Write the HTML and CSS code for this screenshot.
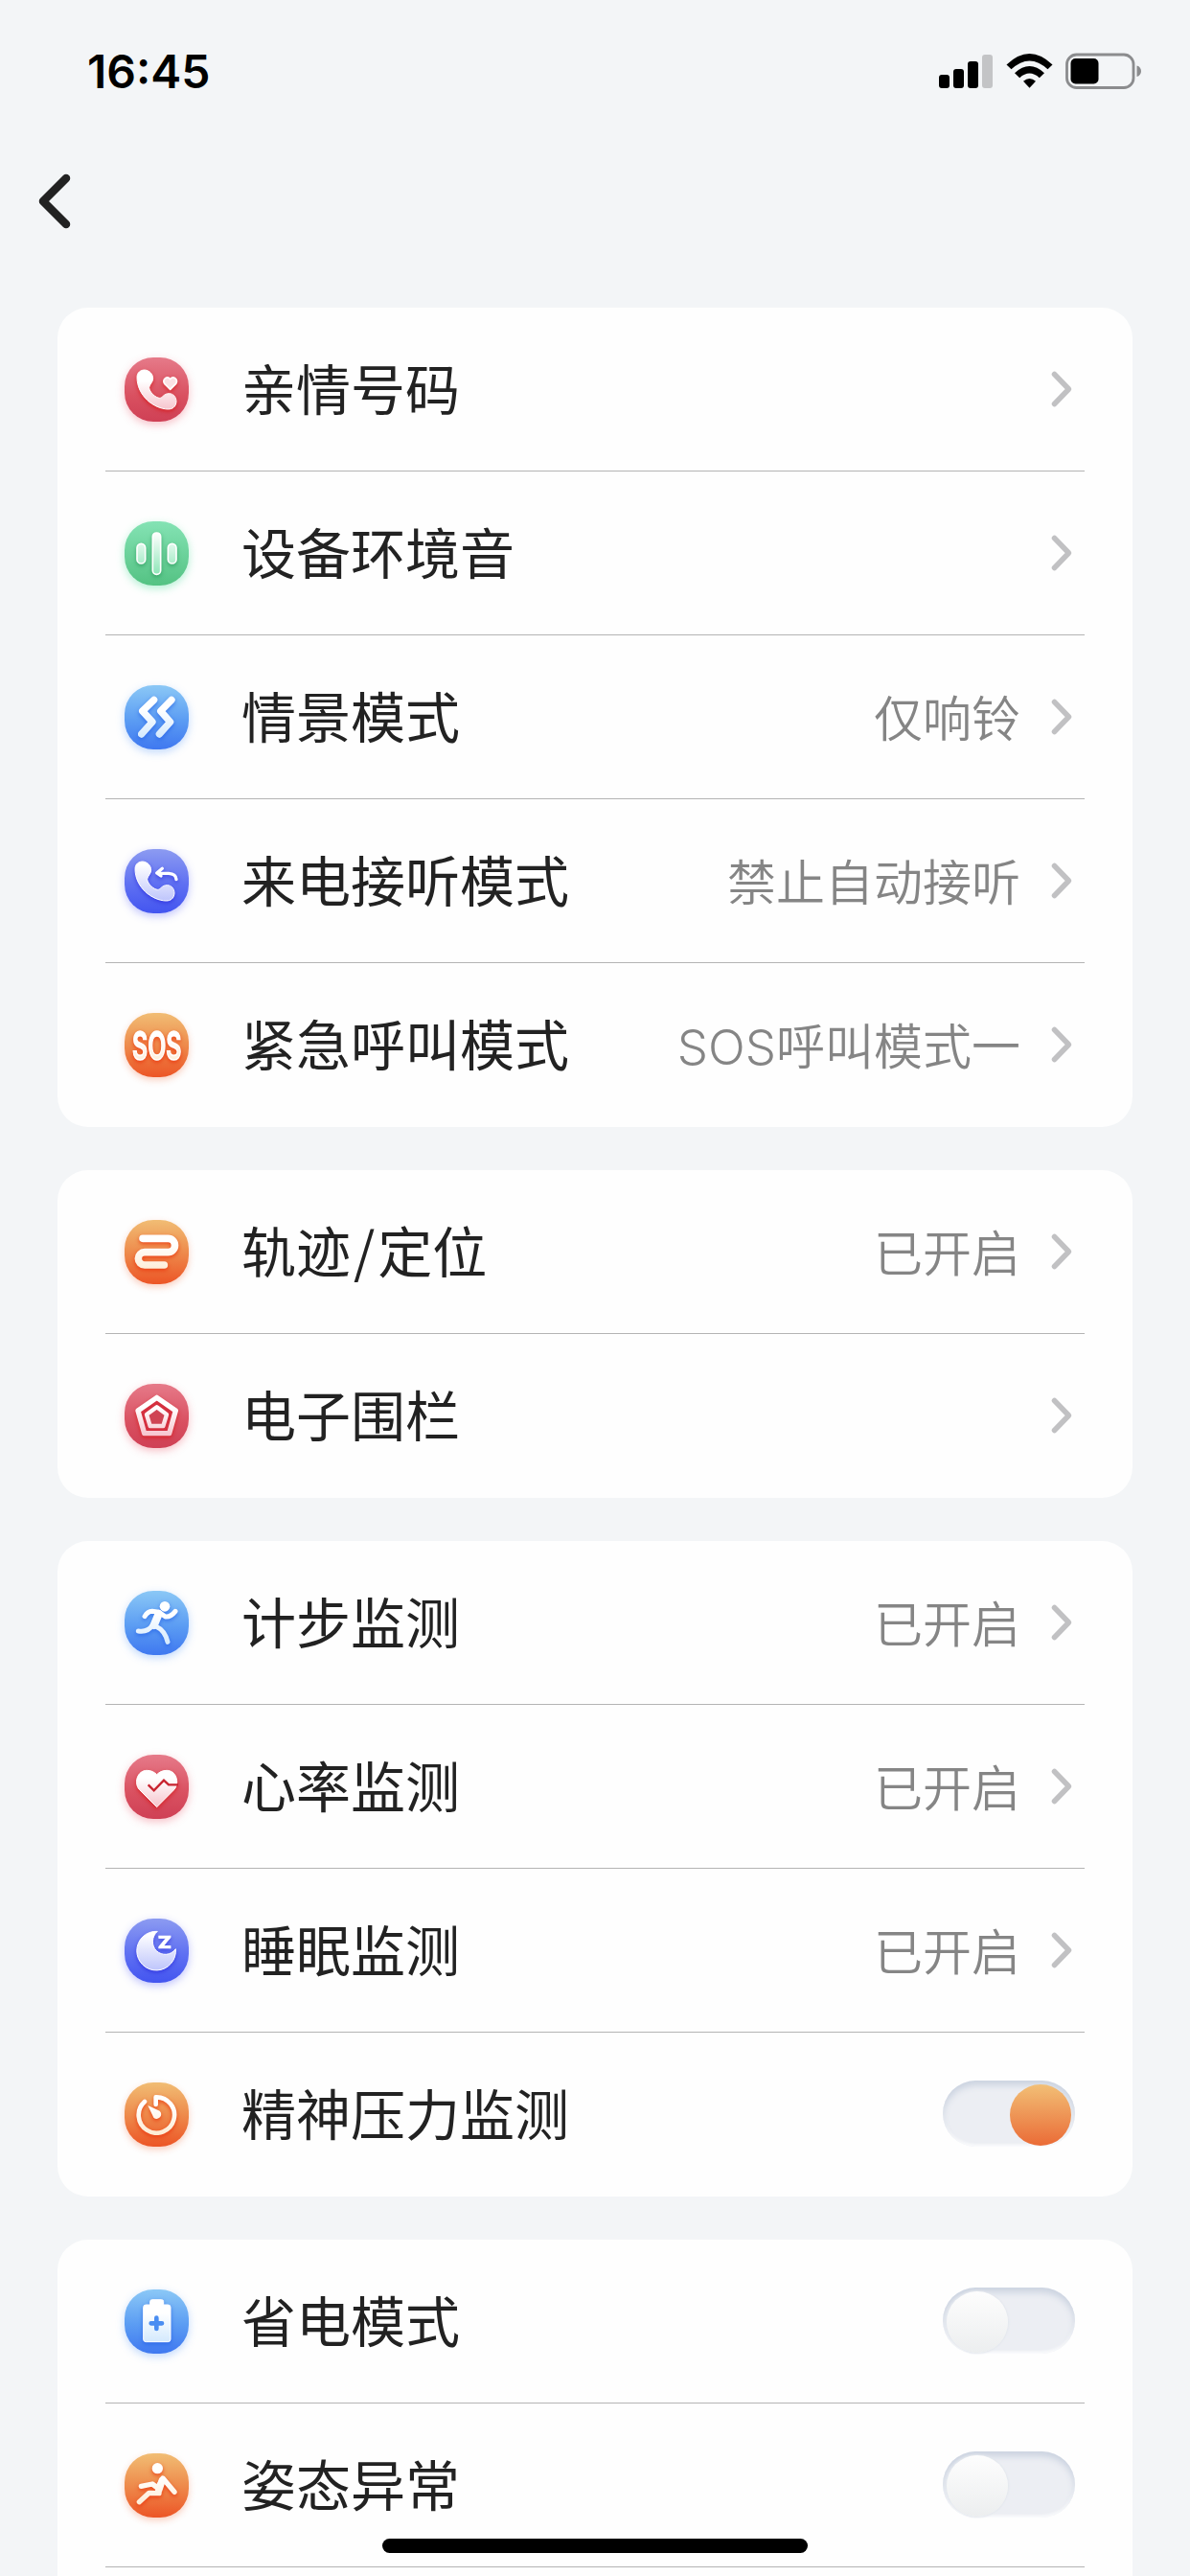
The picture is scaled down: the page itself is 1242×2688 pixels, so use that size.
FILE: index.html
```html
<!DOCTYPE html>
<html lang="zh-CN">
<head>
    <meta charset="UTF-8">
    <meta name="viewport" content="width=device-width, initial-scale=1.0">
    <title>设备设置</title>
    <link rel="stylesheet" href="styles.css">
</head>
<body>
    <!-- 图标渐变 -->
    <svg class="defs" width="0" height="0">
        <defs>
            <linearGradient id="g-red" gradientUnits="userSpaceOnUse" x1="0" y1="35" x2="0" y2="165"><stop offset="0.3" stop-color="#fff"/><stop offset="1" stop-color="#f6c3cc"/></linearGradient>
            <linearGradient id="g-green" gradientUnits="userSpaceOnUse" x1="0" y1="35" x2="0" y2="165"><stop offset="0" stop-color="#fff"/><stop offset="1" stop-color="#8fe6b8"/></linearGradient>
            <linearGradient id="g-blue" gradientUnits="userSpaceOnUse" x1="0" y1="35" x2="0" y2="165"><stop offset="0.3" stop-color="#fff"/><stop offset="1" stop-color="#d3e9fd"/></linearGradient>
            <linearGradient id="g-indigo" gradientUnits="userSpaceOnUse" x1="0" y1="35" x2="0" y2="165"><stop offset="0.1" stop-color="#fff"/><stop offset="1" stop-color="#bcc3fb"/></linearGradient>
            <linearGradient id="g-orange" gradientUnits="userSpaceOnUse" x1="0" y1="35" x2="0" y2="165"><stop offset="0.3" stop-color="#fff"/><stop offset="1" stop-color="#fdebd2"/></linearGradient>
        </defs>
    </svg>

    <div class="status-bar">
        <span class="time">16:45</span>
        <div class="status-icons">
            <svg width="47" height="38" viewBox="0 0 47 38">
                <rect x="0" y="23" width="11" height="14" rx="3"/>
                <rect x="15" y="17" width="11" height="20" rx="3"/>
                <rect x="30" y="9" width="11" height="28" rx="3"/>
                <rect x="45" y="2" width="11" height="35" rx="3" fill="#c3c4c6"/>
            </svg>
            <svg class="wifi" width="49" height="38" viewBox="0 0 49 38">
                <path d="M0.5 12.5 Q24.5 -10.5 48.5 12.5 L43.5 17.3 Q24.5 -0.5 5.5 17.3Z"/>
                <path d="M9 21.2 Q24.5 6.8 40 21.2 L34.8 26.2 Q24.5 17 14.2 26.2Z"/>
                <path d="M18 29.8 Q24.5 24.4 31 29.8 L24.5 36.8Z"/>
            </svg>
            <svg class="battery" width="80" height="38" viewBox="0 0 80 38">
                <rect x="1.5" y="2" width="69.5" height="34.5" rx="10" fill="none" stroke="#8b8c8e" stroke-width="2.8"/>
                <rect x="5.5" y="6" width="29" height="26.5" rx="5"/>
                <path d="M74.5 13.5 C80.5 15 80.5 23.5 74.5 25Z" fill="#8b8c8e"/>
            </svg>
        </div>
    </div>

    <div class="nav">
        <svg width="34" height="58" viewBox="0 0 34 58">
            <path d="M29 5 L5 29 L29 53" fill="none" stroke="#222" stroke-width="8.5" stroke-linecap="round" stroke-linejoin="round"/>
        </svg>
    </div>

    <div class="content">
        <div class="card">
            <div class="row">
                <div class="icon red">
                    <svg viewBox="0 0 201 201">
                        <path d="M39 62C39 47 50 39 63 39C78 40 89 52 89 66C89 78 78 84 77 94C77 108 98 127 110 127C119 127 122 113 139 113C153 113 162 124 162 138C161 155 150 162 136 162C92 161 39 120 39 62Z" fill="url(#g-red)" stroke="#fff" stroke-width="3"/>
                        <path d="M143 100L125 82C117 68 134 56 143 68C152 56 169 68 161 82Z" fill="#fbe0e4" stroke="#fff" stroke-width="5" stroke-linejoin="round"/>
                    </svg>
                </div>
                <span class="label">亲情号码</span>
                <svg class="chevron" viewBox="0 0 22 38"><path d="M3.5 3.5L18.5 19L3.5 34.5"/></svg>
            </div>
            <div class="row">
                <div class="icon green">
                    <svg viewBox="0 0 201 201" fill="url(#g-green)" stroke="#fff" stroke-width="5">
                        <rect x="39" y="70" width="26" height="62" rx="13"/>
                        <rect x="88" y="36" width="25" height="130" rx="12"/>
                        <rect x="136" y="70" width="26" height="62" rx="13"/>
                    </svg>
                </div>
                <span class="label">设备环境音</span>
                <svg class="chevron" viewBox="0 0 22 38"><path d="M3.5 3.5L18.5 19L3.5 34.5"/></svg>
            </div>
            <div class="row">
                <div class="icon blue">
                    <svg viewBox="0 0 201 201" fill="none" stroke="url(#g-blue)" stroke-width="22" stroke-linecap="round" stroke-linejoin="round">
                        <path d="M92 46L56 81L87 115L53 153"/>
                        <path d="M147 46L113 81L143 115L109 153"/>
                    </svg>
                </div>
                <span class="label">情景模式</span>
                <span class="value">仅响铃</span>
                <svg class="chevron" viewBox="0 0 22 38"><path d="M3.5 3.5L18.5 19L3.5 34.5"/></svg>
            </div>
            <div class="row">
                <div class="icon indigo">
                    <svg viewBox="0 0 201 201">
                        <path transform="translate(-6 0)" d="M39 62C39 47 50 39 63 39C78 40 89 52 89 66C89 78 78 84 77 94C77 108 98 127 110 127C119 127 122 113 139 113C153 113 162 124 162 138C161 155 150 162 136 162C92 161 39 120 39 62Z" fill="url(#g-indigo)" stroke="#fff" stroke-width="3"/>
                        <path d="M118 61L101 75L114 84M103 76H138Q161 77 162 95" fill="none" stroke="#fff" stroke-width="10" stroke-linecap="round" stroke-linejoin="round"/>
                    </svg>
                </div>
                <span class="label">来电接听模式</span>
                <span class="value">禁止自动接听</span>
                <svg class="chevron" viewBox="0 0 22 38"><path d="M3.5 3.5L18.5 19L3.5 34.5"/></svg>
            </div>
            <div class="row">
                <div class="icon orange">
                    <svg viewBox="0 0 201 201">
                        <text class="sos" x="24" y="146" textLength="154" lengthAdjust="spacingAndGlyphs">SOS</text>
                    </svg>
                </div>
                <span class="label">紧急呼叫模式</span>
                <span class="value"><span class="latin">SOS</span>呼叫模式一</span>
                <svg class="chevron" viewBox="0 0 22 38"><path d="M3.5 3.5L18.5 19L3.5 34.5"/></svg>
            </div>
        </div>

        <div class="card">
            <div class="row">
                <div class="icon orange">
                    <svg viewBox="0 0 201 201" fill="none" stroke="url(#g-orange)" stroke-width="23" stroke-linecap="round">
                        <path d="M57 58H136A21.5 21.5 0 0 1 136 101H63A20 20 0 0 0 63 141H124"/>
                    </svg>
                </div>
                <span class="label">轨迹<span class="slash">/</span>定位</span>
                <span class="value">已开启</span>
                <svg class="chevron" viewBox="0 0 22 38"><path d="M3.5 3.5L18.5 19L3.5 34.5"/></svg>
            </div>
            <div class="row">
                <div class="icon red">
                    <svg viewBox="0 0 201 201" fill="none" stroke="url(#g-red)" stroke-linejoin="round">
                        <path d="M101 43L160 84L140 155H62L42 84Z" fill="#d5303f" stroke-width="16"/>
                        <path d="M101 73L132 96L121 132H80L69 96Z" fill="#cf4453" stroke-width="13"/>
                    </svg>
                </div>
                <span class="label">电子围栏</span>
                <svg class="chevron" viewBox="0 0 22 38"><path d="M3.5 3.5L18.5 19L3.5 34.5"/></svg>
            </div>
        </div>

        <div class="card">
            <div class="row">
                <div class="icon blue">
                    <svg viewBox="0 0 201 201" fill="none" stroke="url(#g-blue)" stroke-width="15" stroke-linecap="round" stroke-linejoin="round">
                        <circle cx="126" cy="49" r="16" fill="#fff" stroke="none"/>
                        <path d="M63 80Q72 65 86 64L108 67L128 81Q144 83 159 64"/>
                        <path d="M107 72L92 108" stroke-width="25"/>
                        <path d="M88 107Q73 131 43 126"/>
                        <path d="M99 112Q126 124 135 160"/>
                    </svg>
                </div>
                <span class="label">计步监测</span>
                <span class="value">已开启</span>
                <svg class="chevron" viewBox="0 0 22 38"><path d="M3.5 3.5L18.5 19L3.5 34.5"/></svg>
            </div>
            <div class="row">
                <div class="icon red">
                    <svg viewBox="0 0 201 201">
                        <path d="M101 164L46 109C28 88 40 49 70 49C84 49 94 55 101 62C108 55 118 49 132 49C160 49 174 84 156 109Z" fill="url(#g-red)" stroke="#fff" stroke-width="3" stroke-linejoin="round"/>
                        <path d="M74 94L92 112L123 80L138 94H168" fill="none" stroke="#c8232f" stroke-width="7"/>
                    </svg>
                </div>
                <span class="label">心率监测</span>
                <span class="value">已开启</span>
                <svg class="chevron" viewBox="0 0 22 38"><path d="M3.5 3.5L18.5 19L3.5 34.5"/></svg>
            </div>
            <div class="row">
                <div class="icon indigo">
                    <svg viewBox="0 0 201 201">
                        <path d="M103 40A61 61 0 1 0 160 95C145 116 117 117 100 101C83 84 85 56 103 40Z" fill="url(#g-indigo)" stroke="#fff" stroke-width="3" stroke-linejoin="round"/>
                        <text class="zzz" x="104" y="93" textLength="43" lengthAdjust="spacingAndGlyphs">Z</text>
                    </svg>
                </div>
                <span class="label">睡眠监测</span>
                <span class="value">已开启</span>
                <svg class="chevron" viewBox="0 0 22 38"><path d="M3.5 3.5L18.5 19L3.5 34.5"/></svg>
            </div>
            <div class="row">
                <div class="icon orange">
                    <svg viewBox="0 0 201 201">
                        <path d="M98 69V46A56 56 0 1 1 63 60" fill="none" stroke="url(#g-orange)" stroke-width="14" stroke-linecap="round" stroke-linejoin="round"/>
                        <path d="M73 72L110 89A14 14 0 1 1 91 110Z" fill="url(#g-orange)"/>
                    </svg>
                </div>
                <span class="label">精神压力监测</span>
                <div class="switch on"><div class="knob"></div></div>
            </div>
        </div>

        <div class="card last">
            <div class="row">
                <div class="icon blue">
                    <svg viewBox="0 0 201 201">
                        <path d="M67 48H80V38Q80 32 86 32H116Q122 32 122 38V48H136Q144 48 144 56V156Q144 164 136 164H67Q59 164 59 156V56Q59 48 67 48Z" fill="url(#g-blue)" stroke="#fff" stroke-width="3"/>
                        <path d="M100 89V123M83 106H117" stroke="#4a8df1" stroke-width="14" stroke-linecap="round"/>
                    </svg>
                </div>
                <span class="label">省电模式</span>
                <div class="switch"><div class="knob"></div></div>
            </div>
            <div class="row">
                <div class="icon orange">
                    <svg viewBox="0 0 201 201" fill="none" stroke="url(#g-orange)" stroke-width="16" stroke-linecap="round" stroke-linejoin="round">
                        <circle cx="103" cy="47" r="17" fill="#fff" stroke="none"/>
                        <path d="M52 103L87 96L103 108L120 78L156 121"/>
                        <path d="M118 84L107 116" stroke-width="22"/>
                        <path d="M108 125L77 124L46 152"/>
                    </svg>
                </div>
                <span class="label">姿态异常</span>
                <div class="switch"><div class="knob"></div></div>
            </div>
        </div>
    </div>

    <div class="home-indicator"></div>
</body>
</html>
```
FILE: styles.css
```css
* {
    box-sizing: border-box;
}

body {
    margin: 0;
    width: 1242px;
    height: 2688px;
    overflow: hidden;
    position: relative;
    background-color: #f3f5f7;
    font-family: 'Noto Sans CJK SC', sans-serif;
}

svg {
    display: block;
    overflow: visible;
}

.defs {
    position: absolute;
}

.status-bar {
    display: flex;
    justify-content: space-between;
    align-items: center;
    height: 148px;
    padding: 0 50px 0 91px;
}

.time {
    font-family: 'Inter', sans-serif;
    font-size: 48px;
    font-weight: 600;
    color: #000;
}

.status-icons {
    display: flex;
}

.wifi {
    margin-left: 23px;
}

.battery {
    margin-left: 13px;
}

.nav {
    height: 173px;
    padding: 33px 0 0 40px;
}

.content {
    display: flex;
    flex-direction: column;
    gap: 45px;
    padding: 0 60px;
}

.card {
    background-color: #fefefe;
    border-radius: 32px;
    padding: 0 50px;
}

.card.last {
    padding-bottom: 60px;
}

.row {
    display: flex;
    align-items: center;
    height: 171px;
    padding: 0 13px 0 20px;
    border-bottom: 1px solid #b4b4b4;
}

.card:not(.last) .row:last-child {
    border-bottom-color: transparent;
}

.icon {
    width: 67px;
    height: 67px;
    border-radius: 30px;
    flex-shrink: 0;
}

.icon svg {
    width: 67px;
    height: 67px;
}

.icon.red {
    background: linear-gradient(#e67a89, #d95060 60%, #cf4055);
    box-shadow: 0 3px 8px rgba(235, 80, 100, 0.35);
}

.icon.red svg {
    filter: drop-shadow(0 2px 2px rgba(215, 20, 20, 0.7));
}

.icon.green {
    background: linear-gradient(#84e3b4, #54c283);
    box-shadow: 0 3px 8px rgba(70, 220, 150, 0.4);
}

.icon.green svg {
    filter: drop-shadow(0 2px 2px rgba(30, 140, 80, 0.6));
}

.icon.blue {
    background: linear-gradient(#8bc8f6, #5b9cf3 55%, #3f78f0);
    box-shadow: 0 3px 8px rgba(80, 150, 250, 0.35);
}

.icon.blue svg {
    filter: drop-shadow(0 2px 2px rgba(30, 90, 230, 0.65));
}

.icon.indigo {
    background: linear-gradient(#8c9bf1, #5f70f2 55%, #4355f0);
    box-shadow: 0 3px 8px rgba(80, 90, 250, 0.35);
}

.icon.indigo svg {
    filter: drop-shadow(0 2px 2px rgba(40, 40, 220, 0.65));
}

.icon.orange {
    background: linear-gradient(#f1bd74, #ee8b4c 50%, #ec5526);
    box-shadow: 0 3px 7px rgba(240, 100, 50, 0.3);
}

.icon.orange svg {
    filter: drop-shadow(0 2px 2px rgba(235, 50, 10, 0.8));
}

.sos {
    font-family: 'Inter', sans-serif;
    font-size: 124px;
    font-weight: 600;
    fill: url(#g-orange);
    stroke: #fff;
    stroke-width: 5px;
}

.zzz {
    font-family: 'Inter', sans-serif;
    font-size: 51px;
    font-weight: 800;
    fill: #fff;
    stroke: #fff;
    stroke-width: 2px;
}

.label {
    margin-left: 55px;
    padding-bottom: 7px;
    font-size: 57px;
    line-height: 80px;
    color: #222;
    white-space: nowrap;
}

.slash {
    padding: 0 3px;
}

.value {
    margin-left: auto;
    padding-bottom: 2px;
    font-size: 51px;
    line-height: 72px;
    font-weight: 350;
    color: #858585;
    white-space: nowrap;
}

.latin {
    font-family: 'Inter', sans-serif;
    font-weight: 300;
    line-height: 1;
}

.chevron {
    width: 22px;
    height: 38px;
    margin-left: auto;
    flex-shrink: 0;
}

.value + .chevron {
    margin-left: 32px;
}

.chevron path {
    fill: none;
    stroke: #c1c1c3;
    stroke-width: 5.5;
    stroke-linecap: round;
    stroke-linejoin: round;
}

.switch {
    display: flex;
    width: 138px;
    height: 69px;
    margin: 0 -3px 2px auto;
    padding: 4px;
    border-radius: 35px;
    background-color: #eceef3;
    box-shadow: inset 0 5px 7px #cbd3e0, inset 0 -2px 3px #fefefe;
}

.switch.on {
    justify-content: flex-end;
}

.knob {
    width: 64px;
    height: 64px;
    border-radius: 50%;
    background: linear-gradient(#fdfdfd, #eceeef);
    box-shadow: 0 0 2px 1px #e3e7ed;
}

.switch.on .knob {
    background: linear-gradient(#f2bf76, #ea6b36);
    box-shadow: none;
}

.home-indicator {
    position: absolute;
    left: 399px;
    bottom: 24px;
    width: 444px;
    height: 15px;
    border-radius: 8px;
    background-color: #000;
}
```
